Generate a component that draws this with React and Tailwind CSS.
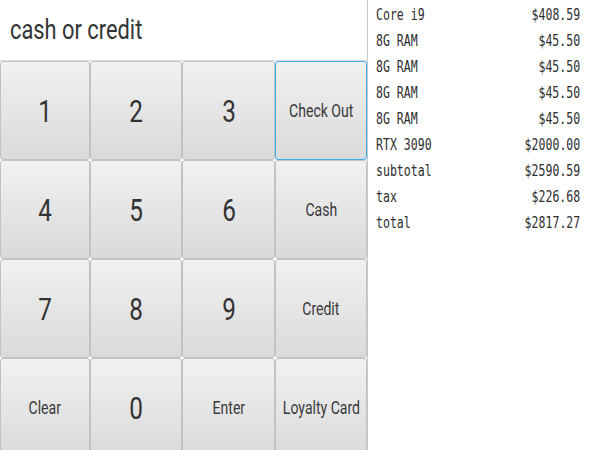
import React from "react";

const keys = [
  { t: "1", big: true },
  { t: "2", big: true },
  { t: "3", big: true },
  { t: "Check Out", focus: true },
  { t: "4", big: true },
  { t: "5", big: true },
  { t: "6", big: true },
  { t: "Cash" },
  { t: "7", big: true },
  { t: "8", big: true },
  { t: "9", big: true },
  { t: "Credit" },
  { t: "Clear" },
  { t: "0", big: true },
  { t: "Enter" },
  { t: "Loyalty Card" },
];

const items = [
  ["Core i9", "$408.59"],
  ["8G RAM", "$45.50"],
  ["8G RAM", "$45.50"],
  ["8G RAM", "$45.50"],
  ["8G RAM", "$45.50"],
  ["RTX 3090", "$2000.00"],
  ["subtotal", "$2590.59"],
  ["tax", "$226.68"],
  ["total", "$2817.27"],
];

export default function App() {
  return (
    <div className="w-[600px] h-[450px] overflow-hidden bg-white flex text-[#333]" style={{ fontFamily: "Roboto, 'Liberation Sans', sans-serif" }}>
      <div className="w-[368px] shrink-0 border-r border-[#c8c8c8] flex flex-col bg-white">
        <div className="h-[61px] shrink-0 border-b border-[#dcdcdc] flex items-center pl-[10px]">
          <span className="inline-block text-[28px] leading-none scale-x-[0.78] origin-left whitespace-nowrap text-[#333]">cash or credit</span>
        </div>
        <div className="grid grid-cols-[90px_92px_93px_minmax(0,1fr)] auto-rows-[99px] bg-white">
          {keys.map((k, i) => (
            <div
              key={i}
              className={
                "min-w-0 flex items-center justify-center rounded-[3px] border bg-gradient-to-b from-[#f1f1f1] to-[#dadada] " +
                (k.focus ? "border-[#3daee9]" : "border-[#c2c2c2]")
              }
            >
              {k.big ? (
                <span className="inline-block text-[32px] leading-none scale-x-[0.76] whitespace-nowrap text-[#333]">{k.t}</span>
              ) : (
                <span className="inline-block text-[18px] leading-none scale-x-[0.78] whitespace-nowrap text-[#3a3a3a]">{k.t}</span>
              )}
            </div>
          ))}
        </div>
      </div>
      <div className="flex-1 pt-[2px] pl-[8px] pr-[20px]" style={{ fontFamily: "'DejaVu Sans Mono', monospace" }}>
        {items.map(([a, b], i) => (
          <div key={i} className="h-[26px] flex items-center justify-between text-[15px] leading-none text-[#2e2e2e]">
            <span className="inline-block scale-x-[0.77] origin-left whitespace-nowrap">{a}</span>
            <span className="inline-block scale-x-[0.77] origin-right whitespace-nowrap">{b}</span>
          </div>
        ))}
      </div>
    </div>
  );
}
